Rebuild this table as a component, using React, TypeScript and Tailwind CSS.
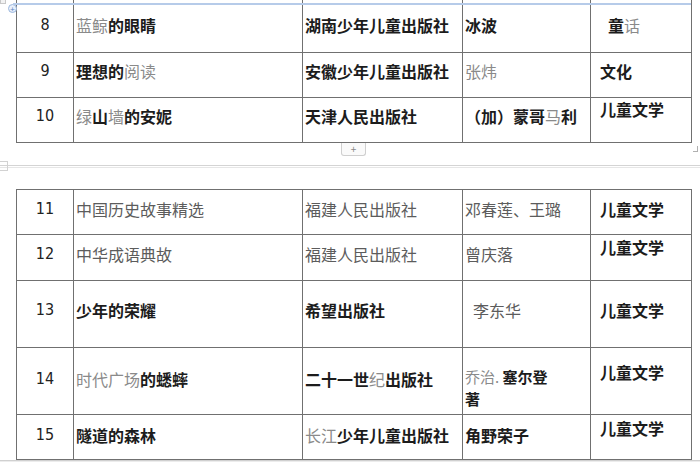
import type { ReactNode } from 'react';

const B = ({ children }: { children: ReactNode }) => (
  <span className="font-bold text-[#1c1c1c]">{children}</span>
);
const G = ({ children }: { children: ReactNode }) => (
  <span className="text-[#8a8a8a]">{children}</span>
);
const S = ({ children }: { children: ReactNode }) => (
  <span className="text-[#5c5c5c]">{children}</span>
);

type Row = {
  h: string;
  num: string;
  pt: string;
  title: ReactNode;
  pub: ReactNode;
  author: ReactNode;
  authorCls?: string;
  cat: ReactNode;
  catCls: string;
};

const firstPage: Row[] = [
  {
    h: 'h-[48px]',
    num: '8',
    pt: 'pt-[9px]',
    title: (
      <>
        <G>蓝鲸</G>
        <B>的眼睛</B>
      </>
    ),
    pub: <B>湖南少年儿童出版社</B>,
    author: <B>冰波</B>,
    cat: (
      <>
        <B>童</B>
        <G>话</G>
      </>
    ),
    catCls: 'pt-[9px] pl-[17px]',
  },
  {
    h: 'h-[45px]',
    num: '9',
    pt: 'pt-[7px]',
    title: (
      <>
        <B>理想的</B>
        <G>阅读</G>
      </>
    ),
    pub: <B>安徽少年儿童出版社</B>,
    author: <G>张炜</G>,
    cat: <B>文化</B>,
    catCls: 'pt-[7px] pl-[9px]',
  },
  {
    h: 'h-[45px]',
    num: '10',
    pt: 'pt-[7px]',
    title: (
      <>
        <G>绿</G>
        <B>山</B>
        <G>墙</G>
        <B>的安妮</B>
      </>
    ),
    pub: <B>天津人民出版社</B>,
    author: (
      <>
        <B>（加）蒙哥</B>
        <G>马</G>
        <B>利</B>
      </>
    ),
    cat: <B>儿童文学</B>,
    catCls: 'pt-0 pl-[9px]',
  },
];

const secondPage: Row[] = [
  {
    h: 'h-[45px]',
    num: '11',
    pt: 'pt-[8px]',
    title: <S>中国历史故事精选</S>,
    pub: <S>福建人民出版社</S>,
    author: <S>邓春莲、王璐</S>,
    cat: <B>儿童文学</B>,
    catCls: 'pt-[8px] pl-[9px]',
  },
  {
    h: 'h-[46px]',
    num: '12',
    pt: 'pt-[8px]',
    title: <S>中华成语典故</S>,
    pub: <S>福建人民出版社</S>,
    author: <S>曾庆落</S>,
    cat: <B>儿童文学</B>,
    catCls: 'pt-[1px] pl-[9px]',
  },
  {
    h: 'h-[67px]',
    num: '13',
    pt: 'pt-[18px]',
    title: <B>少年的荣耀</B>,
    pub: <B>希望出版社</B>,
    author: <S>李东华</S>,
    authorCls: 'pt-[18px] pl-[10px]',
    cat: <B>儿童文学</B>,
    catCls: 'pt-[18px] pl-[9px]',
  },
  {
    h: 'h-[67px]',
    num: '14',
    pt: 'pt-[20px]',
    title: (
      <>
        <G>时代广场</G>
        <B>的蟋蟀</B>
      </>
    ),
    pub: (
      <>
        <B>二十一世</B>
        <G>纪</G>
        <B>出版社</B>
      </>
    ),
    author: (
      <>
        <G>乔治.</G> <B>塞尔登</B>
        <br />
        <B>著</B>
      </>
    ),
    authorCls: 'pt-[18px] pl-[2px] text-[15px] leading-[22px]',
    cat: <B>儿童文学</B>,
    catCls: 'pt-[13px] pl-[9px]',
  },
  {
    h: 'h-[45px]',
    num: '15',
    pt: 'pt-[9px]',
    title: <B>隧道的森林</B>,
    pub: (
      <>
        <G>长江</G>
        <B>少年儿童出版社</B>
      </>
    ),
    author: <B>角野荣子</B>,
    cat: <B>儿童文学</B>,
    catCls: 'pt-[2px] pl-[9px]',
  },
];

const cell = 'border border-[#707070] p-0 align-top';

const BookTable = ({ rows, cut }: { rows: Row[]; cut?: boolean }) => (
  <table className="ml-[16px] w-[675px] table-fixed border-collapse">
    <colgroup>
      <col className="w-[57px]" />
      <col className="w-[229px]" />
      <col className="w-[160px]" />
      <col className="w-[128px]" />
      <col className="w-[101px]" />
    </colgroup>
    <tbody>
      {cut && (
        <tr className="h-[4px]">
          <td className="border-x border-[#707070] p-0" />
          <td className="border-x border-[#707070] p-0" />
          <td className="border-x border-[#707070] p-0" />
          <td className="border-x border-[#707070] p-0" />
          <td className="border-x border-[#707070] p-0" />
        </tr>
      )}
      {rows.map((r) => (
        <tr key={r.num} className={r.h}>
          <td className={cell}>
            <div
              className={`${r.pt} text-center font-['Liberation_Sans_Narrow','DejaVu_Sans_Condensed',sans-serif] text-[16px] text-[#222]`}
            >
              {r.num}
            </div>
          </td>
          <td className={cell}>
            <div className={`${r.pt} pl-[2px] whitespace-nowrap`}>{r.title}</div>
          </td>
          <td className={cell}>
            <div className={`${r.pt} pl-[2px] whitespace-nowrap`}>{r.pub}</div>
          </td>
          <td className={cell}>
            <div className={`${r.authorCls ?? `${r.pt} pl-[2px]`} whitespace-nowrap`}>
              {r.author}
            </div>
          </td>
          <td className={cell}>
            <div className={`${r.catCls} whitespace-nowrap`}>{r.cat}</div>
          </td>
        </tr>
      ))}
    </tbody>
  </table>
);

export default function App() {
  return (
    <div className="relative h-[462px] w-[700px] overflow-hidden bg-white font-['Noto_Sans_CJK_SC',sans-serif] text-[16px] leading-[22px]">
      {/* table handle */}
      <div className="absolute left-0 top-0 h-[4px] w-[6px] border border-t-0 border-[#c8c8c8] bg-[#f2f2f2]" />
      <div className="absolute left-[8px] top-[4px] z-10 flex h-[9px] w-[9px] items-center justify-center rounded-full border border-[#9bb6dc] bg-[#e8f0fb] text-[8px] leading-none text-[#5b84c0]">
        +
      </div>
      {/* selected row boundary */}
      <div className="absolute left-[13px] top-[3px] z-10 h-[2px] w-[678px] bg-[#b6cbe9]" />

      <BookTable rows={firstPage} cut />

      <div className="relative h-[46px]">
        <div className="absolute left-[341px] top-0 flex h-[13px] w-[25px] items-center justify-center rounded-b-[3px] border border-t-0 border-[#cfcfcf] bg-[#fafafa] text-[10px] leading-none text-[#888]">
          +
        </div>
        <div className="absolute left-[693px] top-[3px] h-[6px] w-[5px] border-b border-r border-[#b0b0b0]" />
        <div className="absolute left-0 top-[18px] h-[10px] w-[8px] border border-l-0 border-[#d2d2d2]" />
        <div className="pt-[22px]">
          <div className="h-[1px] w-full bg-[#d4d4d4]" />
          <div className="mt-[1px] h-[1px] w-full bg-[#e6e6e6]" />
        </div>
      </div>

      <BookTable rows={secondPage} />

      <div className="h-[6px] border-t border-[#d0d0d0] bg-[#ececec]" />
    </div>
  );
}
